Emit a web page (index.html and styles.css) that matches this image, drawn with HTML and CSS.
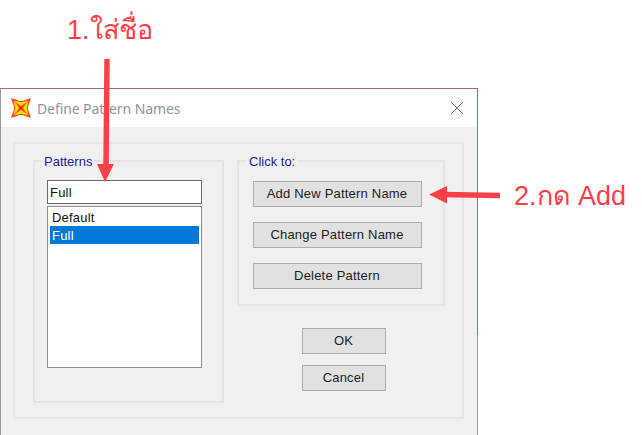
FILE: index.html
```html
<!DOCTYPE html>
<html lang="en">

<head>
    <meta charset="UTF-8">
    <title>Define Pattern Names</title>
    <link rel="stylesheet" href="styles.css">
</head>

<body>
    <div class="note-top">1.ใส่ชื่อ</div>

    <div class="window">
        <div class="titlebar">
            <svg class="app-icon" width="20" height="20" viewBox="0 0 20 20">
                <path d="M0 0 L6 2 Q10 4 14 2 L20 0 L18 6 Q16 10 18 14 L20 20 L14 18 Q10 16 6 18 L0 20 L2 14 Q4 10 2 6 Z" fill="#ff4a20"/>
                <path d="M3 3 L7 3.5 Q10 5 13 3.5 L17 3 L16.500 7 Q15 10 16.500 13 L17 17 L13 16.500 Q10 15 7 16.500 L3 17 L3.500 13 Q5 10 3.500 7 Z" fill="#ffe000"/>
                <path d="M3 3 L10 8 L17 3 L12 10 L17 17 L10 12 L3 17 L8 10 Z" fill="#ff5a10"/>
                <path d="M7 7 L10 9 L13 7 L11 10 L13 13 L10 11 L7 13 L9 10 Z" fill="#e81818"/>
            </svg>
            <span class="title">Define Pattern Names</span>
            <svg class="close" width="12" height="12" viewBox="0 0 12 12">
                <path d="M0 0 L12 12 M12 0 L0 12" stroke="#6e6e6e" stroke-width="1" fill="none"/>
            </svg>
        </div>

        <div class="client">
            <div class="frame">
                <fieldset class="group patterns">
                    <legend>Patterns</legend>
                    <div class="text-input">Full</div>
                    <div class="listbox">
                        <div class="list-item">Default</div>
                        <div class="list-item selected">Full</div>
                    </div>
                </fieldset>

                <div class="right-col">
                    <fieldset class="group actions">
                        <legend>Click to:</legend>
                        <button>Add New Pattern Name</button>
                        <button>Change Pattern Name</button>
                        <button>Delete Pattern</button>
                    </fieldset>

                    <div class="dialog-buttons">
                        <button>OK</button>
                        <button>Cancel</button>
                    </div>
                </div>
            </div>
        </div>
    </div>

    <div class="note-right">2.กด Add</div>

    <svg class="arrow arrow-down" width="24" height="124" viewBox="0 0 24 124">
        <path d="M13 0 L12 108" stroke="#fb4048" stroke-width="5.500" fill="none"/>
        <path d="M3 105 H20 L11 123 Z" fill="#fb4048"/>
    </svg>
    <svg class="arrow arrow-left" width="74" height="20" viewBox="0 0 74 20">
        <path d="M14 8.500 L71 9.500" stroke="#fb4048" stroke-width="5.500" fill="none"/>
        <path d="M0 8.500 L18 0 V17.500 Z" fill="#fb4048"/>
    </svg>
</body>

</html>
```

FILE: styles.css
```css
html,
body {
    margin: 0;
    height: 435px;
    overflow: hidden;
    background-color: #fff;
}

body {
    font-family: 'Liberation Sans', Arial, sans-serif;
    position: relative;
}

.note-top {
    height: 88px;
    box-sizing: border-box;
    padding: 12px 0 0 67px;
    font-size: 27px;
    line-height: 36px;
    color: #fb4048;
}

.note-right {
    position: absolute;
    left: 514px;
    top: 178px;
    font-size: 27px;
    line-height: 36px;
    color: #fb4048;
    white-space: nowrap;
}

.arrow {
    position: absolute;
}

.arrow-down {
    left: 94px;
    top: 59px;
}

.arrow-left {
    left: 429px;
    top: 186px;
}

.window {
    position: relative;
    width: 478px;
    height: 347px;
    box-sizing: border-box;
    border: 1px solid #a5666e;
    border-left-color: #9a9a9a;
    border-bottom: none;
    background-color: #f0f0f0;
}

/* lower part of the right edge is plain grey */
.window::after {
    content: "";
    position: absolute;
    right: -1px;
    top: 246px;
    bottom: 0;
    width: 1px;
    background-color: #9a9a9a;
}

.titlebar {
    height: 38px;
    display: flex;
    align-items: center;
    padding: 0 14px 0 10px;
    background-color: #fff;
}

.app-icon {
    flex: none;
}

.title {
    flex: 1;
    margin-left: 6px;
    font-family: 'Noto Sans', sans-serif;
    font-size: 14px;
    letter-spacing: -0.1px;
    color: #8f949c;
}

.client {
    padding: 15px 12px 0;
}

.frame {
    width: 451px;
    height: 277px;
    box-sizing: border-box;
    border: 2px solid #e6e6e6;
    display: flex;
    gap: 13px;
    padding: 9px 18px 0;
}

.group {
    flex: none;
    margin: 0;
    border: 2px solid #e4e4e4;
    box-sizing: border-box;
}

.group legend {
    padding: 2px 2px 0;
    font-size: 13px;
    line-height: 14px;
    color: #1a1a9c;
}

.patterns {
    width: 191px;
    height: 250px;
    padding: 11px 20px 0 12px;
}

.patterns legend {
    margin-left: -5px;
}

.right-col {
    flex: none;
    display: flex;
    flex-direction: column;
}

.actions {
    width: 208px;
    height: 153px;
    padding: 12px 21px 0 14px;
    display: flex;
    flex-direction: column;
    gap: 15px;
}

.actions legend {
    margin-left: -6px;
}

.text-input {
    height: 24px;
    box-sizing: border-box;
    border: 1px solid #6a6a6a;
    background-color: #fff;
    padding: 0 2px;
    font-size: 13px;
    letter-spacing: 0.2px;
    line-height: 23px;
    color: #111;
}

.listbox {
    margin-top: 2px;
    height: 162px;
    box-sizing: border-box;
    border: 1px solid #8a8f96;
    background-color: #fff;
    padding: 1px 2px;
    font-size: 13px;
    letter-spacing: 0.2px;
    line-height: 20px;
    color: #111;
}

.list-item {
    height: 18px;
    padding-left: 2px;
}

.list-item.selected {
    background-color: #0078d7;
    color: #fff;
}

button {
    display: block;
    height: 26px;
    padding: 0 1px 2px 0;
    box-sizing: border-box;
    border: 1px solid #adadad;
    background-color: #e1e1e1;
    font-family: inherit;
    font-size: 13px;
    letter-spacing: 0.2px;
    color: #1c1c1c;
}

.dialog-buttons {
    margin: 22px 0 0 65px;
    width: 84px;
    display: flex;
    flex-direction: column;
    gap: 11px;
}
```
